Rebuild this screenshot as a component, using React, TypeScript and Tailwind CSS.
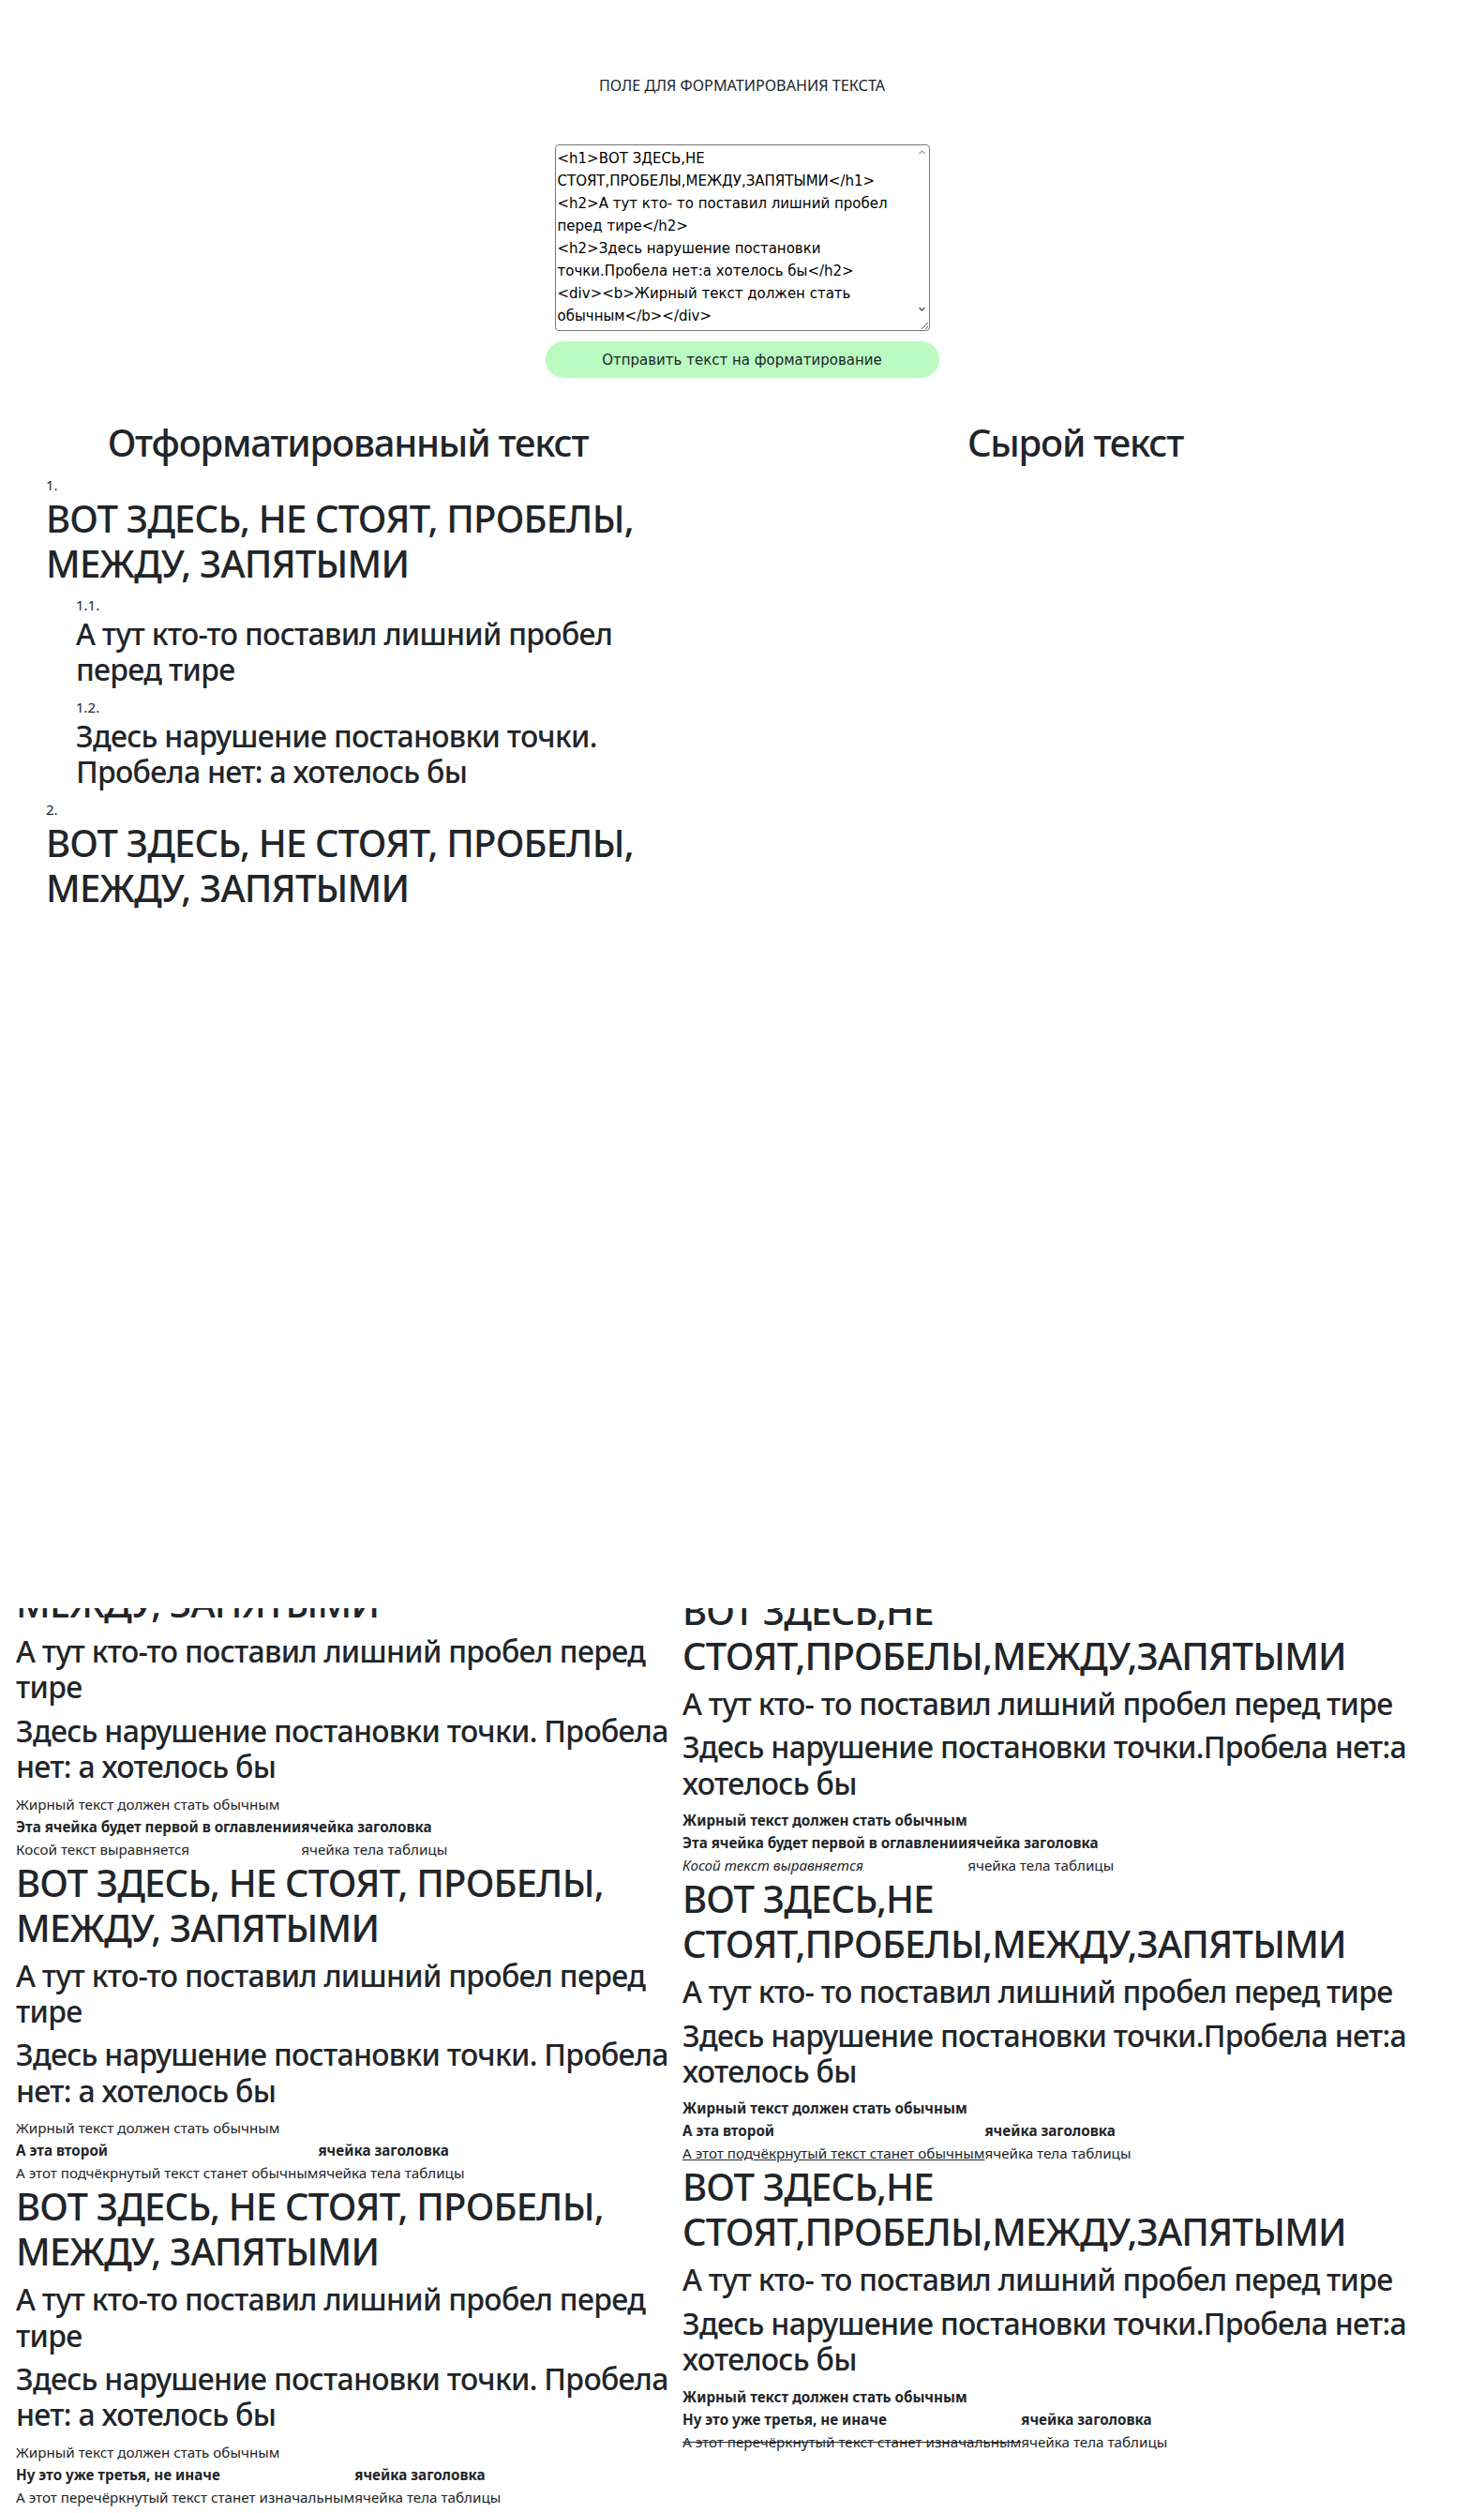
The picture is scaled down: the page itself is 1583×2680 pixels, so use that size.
import React from "react";

type Block = {
    th: string;
    td: string;
    deco: "italic" | "underline" | "line-through";
};

const blocks: Block[] = [
    { th: "Эта ячейка будет первой в оглавлении", td: "Косой текст выравняется", deco: "italic" },
    { th: "А эта второй", td: "А этот подчёкрнутый текст станет обычным", deco: "underline" },
    { th: "Ну это уже третья, не иначе", td: "А этот перечёркнутый текст станет изначальным", deco: "line-through" },
];

const tags = { italic: "i", underline: "u", "line-through": "s" };

const rawSource = blocks
    .map(
        (b) =>
            `<h1>ВОТ ЗДЕСЬ,НЕ СТОЯТ,ПРОБЕЛЫ,МЕЖДУ,ЗАПЯТЫМИ</h1>\n<h2>А тут кто- то поставил лишний пробел перед тире</h2>\n<h2>Здесь нарушение постановки точки.Пробела нет:а хотелось бы</h2>\n<div><b>Жирный текст должен стать обычным</b></div>\n<table>\n<tr><th>${b.th}</th><th>ячейка заголовка</th></tr>\n<tr><td><${tags[b.deco]}>${b.td}</${tags[b.deco]}></td><td>ячейка тела таблицы</td></tr>\n</table>`
    )
    .join("\n");

const h1Cls = "text-[40px] leading-[48px] font-medium tracking-[-0.02em] mb-2";
const h2Cls = "text-[32px] leading-[38.4px] font-medium tracking-[-0.022em] mb-2";
const labelCls = "text-[15px] leading-[24px]";

function ResultTable({ block, raw }: { block: Block; raw?: boolean }) {
    return (
        <table className="border-collapse">
            <tbody>
                <tr>
                    <th className="p-0 text-left font-bold">{block.th}</th>
                    <th className="p-0 text-left font-bold">ячейка заголовка</th>
                </tr>
                <tr>
                    <td className="p-0">
                        {!raw && block.td}
                        {raw && block.deco === "italic" && <i>{block.td}</i>}
                        {raw && block.deco === "underline" && <u>{block.td}</u>}
                        {raw && block.deco === "line-through" && <s>{block.td}</s>}
                    </td>
                    <td className="p-0">ячейка тела таблицы</td>
                </tr>
            </tbody>
        </table>
    );
}

function FormattedBlock({ block }: { block: Block }) {
    return (
        <div>
            <h1 className={h1Cls}>ВОТ ЗДЕСЬ, НЕ СТОЯТ, ПРОБЕЛЫ, МЕЖДУ, ЗАПЯТЫМИ</h1>
            <h2 className={h2Cls}>А тут кто-то поставил лишний пробел перед тире</h2>
            <h2 className={h2Cls}>Здесь нарушение постановки точки. Пробела нет: а хотелось бы</h2>
            <div>Жирный текст должен стать обычным</div>
            <ResultTable block={block} />
        </div>
    );
}

function RawBlock({ block }: { block: Block }) {
    return (
        <div>
            <h1 className={h1Cls}>ВОТ ЗДЕСЬ,НЕ СТОЯТ,ПРОБЕЛЫ,МЕЖДУ,ЗАПЯТЫМИ</h1>
            <h2 className={h2Cls}>А тут кто- то поставил лишний пробел перед тире</h2>
            <h2 className={h2Cls}>Здесь нарушение постановки точки.Пробела нет:а хотелось бы</h2>
            <div className="font-bold">Жирный текст должен стать обычным</div>
            <ResultTable block={block} raw />
        </div>
    );
}

export default function App() {
    return (
        <div className="w-[1583px] h-[2680px] overflow-hidden bg-white text-[#212529] font-['Noto_Sans','Open_Sans',sans-serif] text-[15.2px] leading-[24px]">
            {/* Form + formatted output */}
            <div className="h-[1715px] overflow-hidden pt-[79px]">
                <div className="text-center text-[16.2px] mb-[51px]">ПОЛЕ ДЛЯ ФОРМАТИРОВАНИЯ ТЕКСТА</div>

                <div className="flex flex-col items-center">
                    <div className="relative">
                        <textarea
                            readOnly
                            value={rawSource}
                            className="block w-[400px] h-[199px] border border-[#767676] rounded-[4px] p-[2px] font-['DejaVu_Sans',sans-serif] text-[15px] leading-[24px] text-black resize-y overflow-y-scroll outline-none [&::-webkit-scrollbar]:w-[15px] [&::-webkit-scrollbar-track]:bg-[#f1f1f1] [&::-webkit-scrollbar-thumb]:bg-[#c1c1c1] [&::-webkit-scrollbar-button:single-button]:block [&::-webkit-scrollbar-button:single-button]:h-[15px] [&::-webkit-scrollbar-button:single-button]:bg-[#f1f1f1] [&::-webkit-scrollbar-corner]:bg-[#f1f1f1]"
                        />
                        {/* scrollbar arrows */}
                        <svg className="absolute right-[5px] top-[6px] w-[7px] h-[5px]" viewBox="0 0 7 5">
                            <path d="M0.5 4L3.5 1L6.5 4" fill="none" stroke="#a3a3a3" strokeWidth="1.4" />
                        </svg>
                        <svg className="absolute right-[5px] bottom-[21px] w-[7px] h-[5px]" viewBox="0 0 7 5">
                            <path d="M0.5 1L3.5 4L6.5 1" fill="none" stroke="#505050" strokeWidth="1.4" />
                        </svg>
                    </div>
                    <button className="mt-[11px] w-[420px] h-[39px] rounded-full bg-[#b9fbc0] font-['DejaVu_Sans',sans-serif] text-[15px] text-[#212529]">
                        Отправить текст на форматирование
                    </button>
                </div>

                <div className="flex gap-[3px] px-[17px] mt-[45px]">
                    <div className="w-[708px]">
                        <h2 className="text-center text-[40px] leading-[48px] font-medium tracking-[-0.03em] mb-[9px]">Отформатированный текст</h2>
                        <ol className="pl-8 list-none">
                            <li>
                                <div className={labelCls}>1.</div>
                                <h1 className={h1Cls}>ВОТ ЗДЕСЬ, НЕ СТОЯТ, ПРОБЕЛЫ, МЕЖДУ, ЗАПЯТЫМИ</h1>
                                <ol className="pl-8 list-none">
                                    <li>
                                        <div className={labelCls}>1.1.</div>
                                        <h2 className={h2Cls}>А тут кто-то поставил лишний пробел перед тире</h2>
                                    </li>
                                    <li>
                                        <div className={labelCls}>1.2.</div>
                                        <h2 className={h2Cls}>Здесь нарушение постановки точки. Пробела нет: а хотелось бы</h2>
                                    </li>
                                </ol>
                            </li>
                            <li>
                                <div className={labelCls}>2.</div>
                                <h1 className={h1Cls}>ВОТ ЗДЕСЬ, НЕ СТОЯТ, ПРОБЕЛЫ, МЕЖДУ, ЗАПЯТЫМИ</h1>
                            </li>
                        </ol>
                    </div>
                    <div className="w-[838px]">
                        <h2 className="text-center text-[40px] leading-[48px] font-medium tracking-[-0.03em] mb-[9px]">Сырой текст</h2>
                    </div>
                </div>
            </div>

            {/* Scrolled result panes */}
            <div className="flex gap-[3px] px-[17px] h-[965px]">
                <div className="w-[708px] overflow-hidden">
                    <div className="-mt-[77px]">
                        {blocks.map((b) => (
                            <FormattedBlock key={b.th} block={b} />
                        ))}
                    </div>
                </div>
                <div className="w-[838px] overflow-hidden">
                    <div className="-mt-[21px]">
                        {blocks.map((b) => (
                            <RawBlock key={b.th} block={b} />
                        ))}
                    </div>
                </div>
            </div>
        </div>
    );
}
